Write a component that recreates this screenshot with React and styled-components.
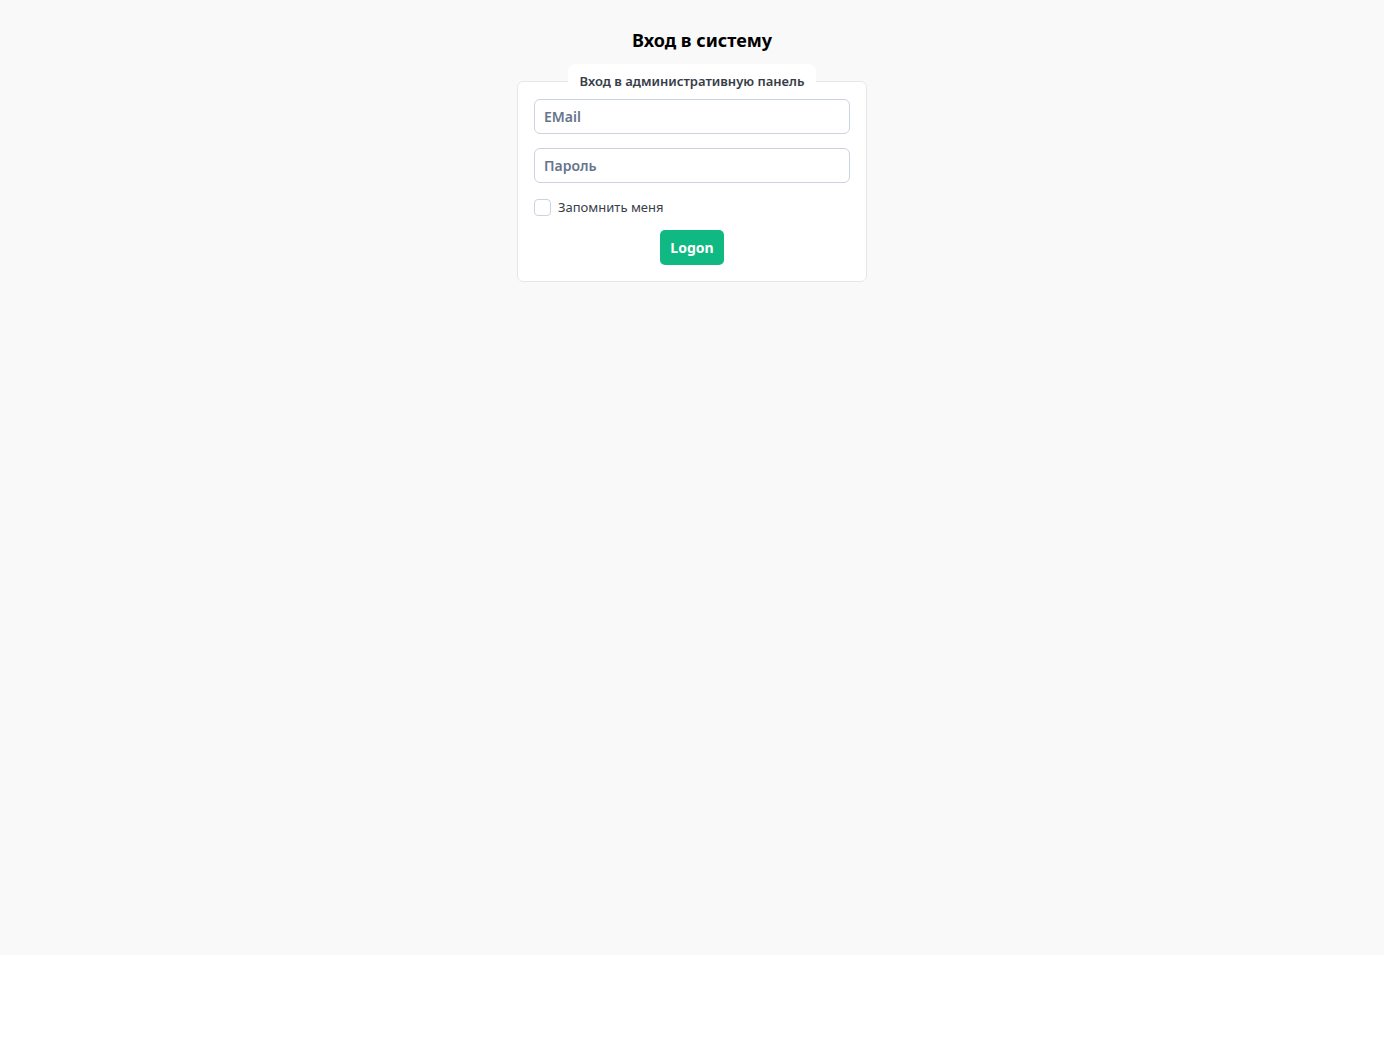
import React from 'react';
import styled, { createGlobalStyle } from 'styled-components';

const GlobalStyle = createGlobalStyle`
    html, body {
        margin: 0;
        padding: 0;
        background: #fff;
    }
    body {
        font-family: 'Noto Sans', 'Open Sans', sans-serif;
    }
`;

const Page = styled.div`
    width: 1384px;
    height: 955px;
    background: #f9f9f9;
    box-sizing: border-box;
    padding-top: 27px;
    display: flex;
    flex-direction: column;
    align-items: center;
`;

const Title = styled.h1`
    margin: 0 0 10px;
    padding-left: 20px;
    font-size: 18px;
    line-height: 27px;
    font-weight: 700;
    color: #000;
`;

const Card = styled.fieldset`
    width: 350px;
    box-sizing: border-box;
    margin: 0;
    padding: 1px 16px 16px;
    background: #fff;
    border: 1px solid #e3e6ec;
    border-radius: 6px;
    display: flex;
    flex-direction: column;
    gap: 14px;
`;

const Legend = styled.legend`
    margin: 0 auto;
    padding: 0 12px;
    height: 34px;
    line-height: 34px;
    background: #fff;
    border-radius: 8px 8px 0 0;
    font-size: 13px;
    font-weight: 600;
    color: #363d48;
`;

const Input = styled.input`
    display: block;
    width: 100%;
    height: 35px;
    box-sizing: border-box;
    padding: 0 9px;
    border: 1px solid #cbd3e0;
    border-radius: 6px;
    background: #fff;
    font-family: inherit;
    font-size: 14px;
    font-weight: 600;
    color: #334155;
    outline: none;
    &::placeholder {
        color: #66758c;
        font-weight: 600;
    }
`;

const CheckRow = styled.label`
    display: flex;
    align-items: center;
    gap: 7px;
    font-size: 13px;
    color: #3a404b;
    cursor: pointer;
    margin-top: 1px;
`;

const Check = styled.span`
    width: 15px;
    height: 15px;
    border: 1px solid #cbd3e0;
    border-radius: 4px;
    background: #fff;
    flex-shrink: 0;
`;

const Actions = styled.div`
    display: flex;
    justify-content: center;
`;

const Button = styled.button`
    height: 35px;
    padding: 0 10px;
    border: none;
    border-radius: 5px;
    background: #10b981;
    color: #fff;
    font-family: inherit;
    font-size: 14px;
    font-weight: 700;
    cursor: pointer;
`;

export default function App() {
    return (
        <>
            <GlobalStyle />
            <Page>
                <Title>Вход в систему</Title>
                <Card>
                    <Legend>Вход в административную панель</Legend>
                    <Input type="email" placeholder="EMail" />
                    <Input type="password" placeholder="Пароль" />
                    <CheckRow>
                        <Check />
                        Запомнить меня
                    </CheckRow>
                    <Actions>
                        <Button>Logon</Button>
                    </Actions>
                </Card>
            </Page>
        </>
    );
}
